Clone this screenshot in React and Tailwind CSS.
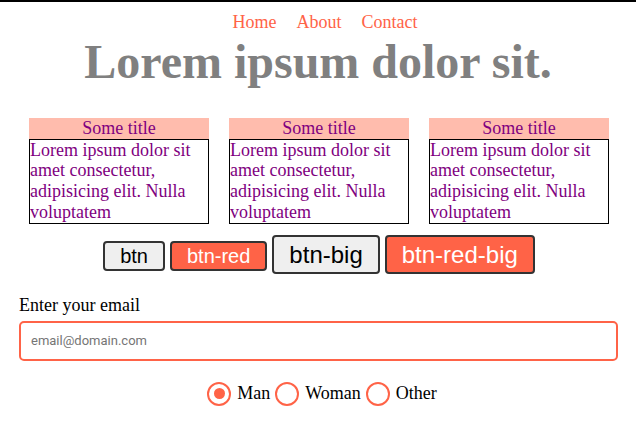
const serif = "font-['Liberation_Serif','Times_New_Roman',serif]";
const sans = "font-['Liberation_Sans',Arial,sans-serif]";

const cards = [1, 2, 3];

function Radio({ label, checked }) {
  return (
    <label className="flex items-center gap-[6px]">
      <span className="grid size-6 place-items-center rounded-full border-2 border-[#ff6347]">
        {checked && <span className="size-[11px] rounded-full bg-[#ff6347]" />}
      </span>
      <span className="text-[18px] leading-[21px] text-black">{label}</span>
    </label>
  );
}

export default function App() {
  return (
    <div className={`min-h-[442px] border-t-2 border-black bg-white ${serif}`}>
      <nav className="mt-[10px] flex justify-center gap-5 pl-[14px] text-[18px] leading-[21px] text-[#ff6347]">
        <a href="#">Home</a>
        <a href="#">About</a>
        <a href="#">Contact</a>
      </nav>
      <h1 className="mt-[2px] text-center text-[48px] font-bold leading-[53px] text-[#808080]">Lorem ipsum dolor sit.</h1>

      <div className="mt-[30px] flex justify-center gap-5 pl-[2px]">
        {cards.map((c) => (
          <div key={c} className="w-[180px] text-[18px] leading-[20.7px] text-[#800080]">
            <div className="bg-[#ffbcad] text-center">Some title</div>
            <div className="border border-black">
              Lorem ipsum dolor sit amet consectetur, adipisicing elit. Nulla voluptatem
            </div>
          </div>
        ))}
      </div>

      <div className={`mt-[11px] flex items-baseline justify-center gap-[5px] pl-[2px] ${sans}`}>
        <button className="rounded-[4px] border-2 border-[#333] bg-[#efefef] px-[15px] py-[2px] text-[20px] leading-[22px] text-black">btn</button>
        <button className="rounded-[4px] border-2 border-[#333] bg-[#ff6347] px-[15px] py-[2px] text-[20px] leading-[22px] text-white">btn-red</button>
        <button className="rounded-[4px] border-2 border-[#333] bg-[#efefef] px-[15px] py-[4px] text-[24px] leading-[27px] text-black">btn-big</button>
        <button className="rounded-[4px] border-2 border-[#333] bg-[#ff6347] px-[15px] py-[4px] text-[24px] leading-[27px] text-white">btn-red-big</button>
      </div>

      <div className="mt-[21px] ml-[19px] mr-[18px]">
        <label className="block text-[18px] leading-[21px] text-black">Enter your email</label>
        <input
          type="email"
          placeholder="email@domain.com"
          className="mt-[5px] block h-[40px] w-full rounded-[5px] border-2 border-[#ff6347] px-[10px] font-['Roboto',sans-serif] text-[13px] text-black outline-none placeholder:text-[#757575]"
        />
      </div>

      <div className="mt-[21px] flex justify-center gap-[5px] pl-[8px]">
        <Radio label="Man" checked />
        <Radio label="Woman" />
        <Radio label="Other" />
      </div>
    </div>
  );
}
